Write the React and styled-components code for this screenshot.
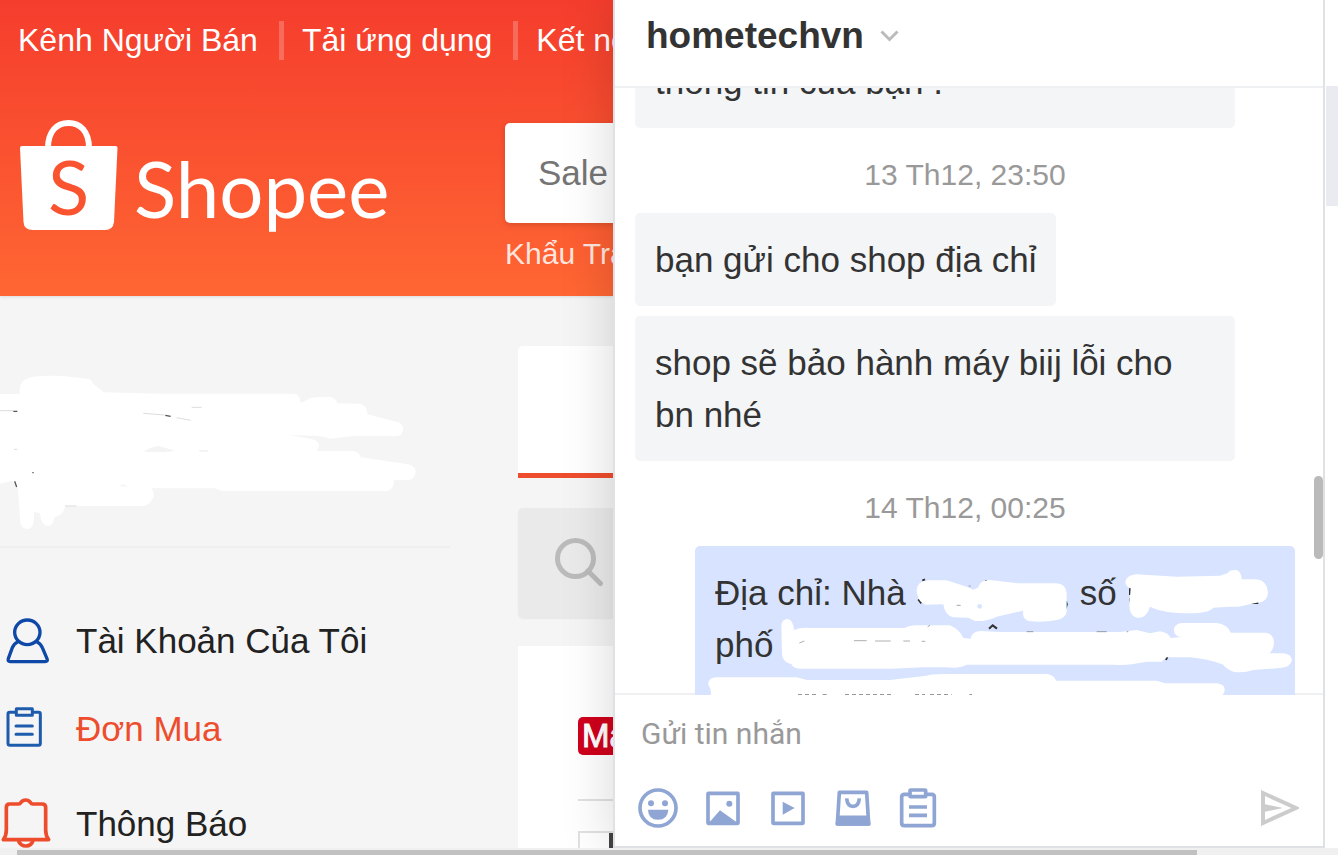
import React, { useLayoutEffect, useRef } from "react";
import styled, { createGlobalStyle } from "styled-components";

const GlobalStyle = createGlobalStyle`
  * {
    box-sizing: border-box;
  }

  body {
    margin: 0;
    overflow: hidden;
    font-family: "Liberation Sans", Arial, sans-serif;
    background-color: white;
  }

  button, input {
    font-family: inherit;
    border: 0;
    padding: 0;
    background: none;
  }
`;

const Page = styled.div`
  display: flex;
  flex-direction: column;
  height: 100vh;
`;

const Columns = styled.div`
  flex: 1;
  min-height: 0;
  display: grid;
  grid-template-columns: 613fr 712fr 13px;
`;

/* ---------- shop ---------- */

const Shop = styled.main`
  min-width: 0;
  overflow: hidden;
  background-color: #f5f5f5;
`;

const ShopHeader = styled.header`
  height: 296px;
  padding-top: 21px;
  background: linear-gradient(#f53d2d, #ff6633);
  box-shadow: 0 1px 3px rgba(0, 0, 0, 0.1);
`;

const TopNav = styled.nav`
  display: flex;
  height: 39px;
  align-items: stretch;
`;

const TopLink = styled.a`
  flex: none;
  padding: 0 21px 0 18px;
  line-height: 38px;
  font-size: 32px;
  color: white;
  text-decoration: none;
  white-space: nowrap;

  & + & {
    border-left: 5px solid rgba(255, 255, 255, 0.22);
  }
`;

const HeaderRow = styled.div`
  display: flex;
  gap: 115px;
  padding: 58px 0 0 20px;
`;

const LogoLink = styled.a`
  flex: none;
  width: 370px;
  height: 122px;
`;

const SearchColumn = styled.div`
  flex: none;
  width: 800px;
  padding-top: 5px;
`;

const SearchBox = styled.input`
  display: block;
  width: 100%;
  height: 100px;
  padding: 0 33px;
  border-radius: 5px;
  background-color: white;
  font-size: 35px;
  box-shadow: 0 2px 6px rgba(0, 0, 0, 0.15);

  &::placeholder {
    color: #757575;
    opacity: 1;
  }
`;

const Keyword = styled.a`
  display: block;
  margin-top: 13px;
  line-height: 35px;
  font-size: 30px;
  color: rgba(255, 255, 255, 0.85);
  text-decoration: none;
`;

const ShopBody = styled.div`
  display: flex;
  gap: 68px;
`;

const Sidebar = styled.aside`
  flex: none;
  width: 450px;
`;

const Profile = styled.div`
  height: 252px;
  border-bottom: 2px solid #efefef;

  svg {
    display: block;
  }
`;

const Menu = styled.nav`
  padding-top: 49px;
`;

const MenuItem = styled.a`
  display: flex;
  align-items: center;
  gap: 24px;
  height: 88px;
  margin-top: ${(props) => (props.$spaced ? "7px" : "0")};
  font-size: 35px;
  color: ${(props) => (props.$active ? "#ee4d2d" : "#222")};
  text-decoration: none;
`;

const Orders = styled.section`
  flex: none;
  width: 1000px;
  padding-top: 50px;
`;

const Tabs = styled.div`
  height: 132px;
  background-color: white;
  border-bottom: 5px solid #ee4d2d;
  border-radius: 5px 5px 0 0;
`;

const OrderSearch = styled.label`
  display: flex;
  align-items: center;
  height: 110px;
  margin: 30px 0 28px;
  padding-left: 35px;
  border-radius: 5px;
  background-color: #eaeaea;
  box-shadow: 0 1px 2px rgba(0, 0, 0, 0.06);
`;

const OrderInput = styled.input`
  flex: 1;
  height: 100%;
`;

const OrderCard = styled.article`
  height: 400px;
  padding: 71px 60px 0;
  background-color: white;
`;

const MallBadge = styled.span`
  display: block;
  width: 80px;
  height: 38px;
  padding-left: 4px;
  border-radius: 5px;
  background-color: #d0011b;
  color: white;
  font-size: 33px;
  line-height: 38px;
  -webkit-text-stroke: 1px white;
`;

const OrderItem = styled.div`
  margin-top: 44px;
  padding-top: 30px;
  border-top: 2px solid #e1e1e1;
`;

const Thumb = styled.div`
  width: 200px;
  height: 200px;
  padding-left: 29px;
  border: 2px solid #e1e1e1;

  &::before {
    content: "";
    display: block;
    height: 100%;
    background-color: #444;
  }
`;

/* ---------- chat ---------- */

const Chat = styled.section`
  position: relative;
  z-index: 1;
  min-width: 0;
  min-height: 0;
  display: flex;
  flex-direction: column;
  background-color: white;
  border: 2px solid #dfe1e5;
  border-top: 0;
  box-shadow: 0 0 50px rgba(0, 0, 0, 0.16);
`;

const ChatHeader = styled.header`
  flex: none;
  display: flex;
  align-items: center;
  gap: 16px;
  height: 88px;
  padding: 0 31px 14px;
  border-bottom: 2px solid #eff0f2;
`;

const ShopName = styled.h1`
  margin: 0;
  font-size: 37px;
  line-height: 44px;
  color: #333;
`;

const IconButton = styled.button`
  display: flex;
  cursor: pointer;
`;

const Scroller = styled.div`
  position: relative;
  z-index: 1;
  flex: 1;
  min-height: 0;
  display: flex;
  margin-bottom: -2px;
`;

const Messages = styled.div`
  flex: 1;
  overflow: hidden;
  padding: 0 19px 0 20px;
`;

const Track = styled.div`
  width: 9px;
  padding-top: 388px;
`;

const TrackThumb = styled.div`
  height: 83px;
  border-radius: 5px;
  background-color: #bababa;
`;

const Bubble = styled.div`
  position: relative;
  width: ${(props) => (props.$wide ? "600px" : "fit-content")};
  max-width: 600px;
  margin-bottom: 10px;
  margin-left: ${(props) => (props.$own ? "auto" : "0")};
  padding: 21px 20px 20px;
  border-radius: 5px;
  background-color: ${(props) => (props.$own ? "#d7e3ff" : "#f4f5f7")};
  font-size: 35px;
  line-height: 52px;
  color: #333;
`;

const Time = styled.div`
  height: 85px;
  margin-top: -10px;
  padding-top: 4px;
  line-height: 85px;
  font-size: 30px;
  text-align: center;
  color: #999;
`;

const Blank = styled.span`
  display: inline-block;
  width: ${(props) => props.$width}px;
`;

const Cover = styled.svg`
  position: absolute;
  top: 0;
  left: 0;
`;

const Composer = styled.form`
  flex: none;
  display: flex;
  flex-direction: column;
  padding: 0 24px 18px 23px;
  border-top: 2px solid #eff0f2;
`;

const MessageInput = styled.input`
  height: 76px;
  margin-bottom: 17px;
  padding: 0 3px;
  font-family: Roboto, sans-serif;
  font-size: 30px;

  &::placeholder {
    color: #999;
    opacity: 1;
  }
`;

const Tools = styled.div`
  display: flex;
  align-items: center;
  gap: 25px;
`;

const SendButton = styled(IconButton)`
  margin-left: auto;
`;

const Rail = styled.div`
  position: relative;
  z-index: 1;
  padding: 86px 0 0 1px;
  background-color: white;
`;

const RailItem = styled.div`
  height: 120px;
  background-color: #eaebf0;
`;

const BottomBar = styled.div`
  position: relative;
  z-index: 2;
  flex: none;
  height: 7px;
  padding: 2px 141px 0 17px;
  background-color: #f0f0f0;
`;

const BottomThumb = styled.div`
  height: 5px;
  background-color: #c1c1c1;
`;

/* ---------- drawings ---------- */

const Logo = () => (
	<svg width="370" height="122" viewBox="20 118 370 122" role="img" aria-label="Shopee">
		<path d="M48 148C48 131 57 123 68.500 123S89 131 89 148" fill="none" stroke="white" strokeWidth="6" />
		<path d="M22 146H115.500Q117.500 146 117.500 148L114 222Q113 230 105 230H33Q24 230 23.500 222L20 148Q20 146 22 146Z" fill="white" />
		<g fontFamily="Lato, sans-serif">
			<text x="48" y="215" fontSize="76" fill="#f9532f">S</text>
			<text x="134" y="218" fontSize="78" fill="white">Shopee</text>
		</g>
	</svg>
);

const UserIcon = () => (
	<svg width="52" height="52" viewBox="0 45 156 156" fill="none" stroke="#0e49a8" strokeWidth="10" strokeLinejoin="round">
		<ellipse cx="82" cy="97" rx="38" ry="37" />
		<path d="M54 125Q42 130 37 143L25 176Q22 185 31 185H135Q145 185 141 176L127 143Q122 130 110 125" />
	</svg>
);

const OrderIcon = () => (
	<svg width="52" height="52" viewBox="0 309 156 156" fill="none" stroke="#1d5cad" strokeWidth="9" strokeLinejoin="round">
		<path d="M48 337H29Q24 337 24 342V430Q24 436 30 436H116Q121 436 121 430V342Q121 337 116 337H98" />
		<rect x="49" y="326" width="48" height="20" />
		<path d="M48 378H97M48 403H97" strokeLinecap="round" />
	</svg>
);

const BellIcon = () => (
	<svg width="52" height="52" viewBox="0 594 156 156" fill="none" stroke="#ee4d2d" strokeWidth="11" strokeLinejoin="round">
		<path d="M10 719Q19 708 19 690V622Q19 612 29 612H56Q60 612 63 607Q68 600 77 600T91 607Q94 612 98 612H126Q137 612 137 622V690Q137 708 146 719Z" />
		<path d="M55 722Q62 738 78 738T99 722" />
	</svg>
);

const SearchIcon = () => (
	<svg width="52" height="52" viewBox="0 0 52 52" fill="none" stroke="#bbb" strokeWidth="5">
		<circle cx="22.500" cy="21.500" r="18" />
		<path d="M35 34L47.500 46.500" strokeLinecap="round" />
	</svg>
);

const TOOLS = [
	{
		label: "Biểu cảm",
		cx: 100,
		draw: (
			<>
				<circle cx="100" cy="100" r="54" />
				<g fill="#8fa5d3" stroke="none">
					<circle cx="79" cy="86" r="9" />
					<circle cx="121" cy="86" r="9" />
					<path d="M70 105H131Q129 135 100 135T70 105Z" />
				</g>
			</>
		),
	},
	{
		label: "Hình ảnh",
		cx: 296,
		draw: (
			<>
				<rect x="251" y="56" width="90" height="90" rx="1" />
				<circle cx="315" cy="87" r="9" fill="#8fa5d3" stroke="none" />
				<path d="M256 142L287 107L336 142Z" fill="#8fa5d3" stroke="none" />
			</>
		),
	},
	{
		label: "Video",
		cx: 491,
		draw: (
			<>
				<rect x="446" y="56" width="90" height="90" rx="1" />
				<path d="M475 81L511 100L475 120Z" fill="#8fa5d3" stroke="none" />
			</>
		),
	},
	{
		label: "Sản phẩm",
		cx: 685,
		draw: (
			<>
				<path d="M644 53H726L732 148H638Z" />
				<path d="M642 128H729L732 148H638Z" fill="#8fa5d3" />
				<path d="M666 71Q668 95 685 95T704 71" />
			</>
		),
	},
	{
		label: "Đơn hàng",
		cx: 876,
		draw: (
			<>
				<path d="M849 59H835Q827 59 827 67V145Q827 153 835 153H917Q925 153 925 145V67Q925 59 917 59H903" />
				<rect x="852" y="46" width="47" height="20" rx="2" />
				<path d="M849 97H903M849 122H903" />
			</>
		),
	},
];

const MENU = [
	{ label: "Tài Khoản Của Tôi", icon: <UserIcon /> },
	{ label: "Đơn Mua", icon: <OrderIcon />, active: true },
	{ label: "Thông Báo", icon: <BellIcon />, spaced: true },
];

const ProfileScribble = () => (
	<svg width="450" height="250" viewBox="0 -192 1350 750" fill="white" aria-hidden="true">
		<path d="M0 102H60Q52 62 90 53Q110 46 190 48L262 56Q274 58 280 72L312 97L480 101H882Q900 103 902 130L930 115Q950 109 990 111Q1008 113 1012 130L1080 131Q1102 136 1102 163L1195 187Q1210 195 1210 208Q1208 227 1190 228L1060 228L990 236L960 228L870 225L935 237Q956 242 957 256Q956 269 948 273H1060Q1078 276 1082 292L1225 313Q1247 320 1247 335Q1246 357 1225 360H1182Q1182 390 1160 393H665L645 385H455Q462 396 462 408Q450 436 430 438H195Q192 466 164 470Q160 495 144 498Q122 496 120 460L102 455V480Q100 507 80 507Q60 503 60 480L54 385L36 362L0 371Z" />
		<path d="M432 274Q450 262 475 258L525 272L500 276H440ZM596 270H625V276H600ZM361 378Q370 368 382 381Z" fill="#f4f4f4" />
		<path d="M496 166L512 169M40 154H52M44 364L50 381M97 338H101" stroke="#555" strokeWidth="4" />
		<path d="M0 152H40M430 160L494 165M530 173L572 181M575 142H605M42 268H52M195 438H230" fill="none" stroke="#ddd" strokeWidth="3" />
	</svg>
);

const AddressScribble = () => (
	<Cover width="600" height="197" viewBox="15 18 1800 591" fill="white" aria-hidden="true">
		<path d="M685 178L694 190M888 120V134M1131 190L1128 200M1320 145V165M1322 175V185M1620 188H1628M1680 189H1705M697 122L705 118" stroke="#333" strokeWidth="6" />
		<path d="M897 266L908 256L921 266" fill="none" stroke="#333" strokeWidth="6" />
		<path d="M1432 350L1428 360" stroke="#333" strokeWidth="6" />
		<path d="M680 150Q683 122 715 121H770L830 140L850 149L865 142Q870 120 900 120L985 130H1100Q1128 132 1130 160V215Q1126 235 1100 240Q1060 248 1015 243Q995 235 1000 212L920 230Q890 245 855 243L835 233L790 232Q764 226 760 193L710 194Q683 190 680 150Z" />
		<path d="M1306 125Q1310 106 1340 103L1460 110L1590 107L1612 100Q1620 88 1640 90Q1654 95 1655 118H1700Q1732 122 1734 158Q1732 188 1700 188L1645 200L1620 200L1570 203Q1555 220 1500 220Q1420 220 1380 200Q1370 234 1345 234Q1320 230 1318 200L1322 144Q1306 140 1306 125Z" />
		<path d="M274 255Q276 237 293 237Q310 240 312 270Q330 262 360 264H645Q660 254 690 256H780Q810 270 820 294L842 296Q845 275 870 273L930 276H1290L1340 270L1380 280L1410 274Q1435 278 1442 294L1475 291Q1450 290 1452 265Q1458 249 1480 249H1580Q1612 252 1622 278H1725Q1752 280 1752 310Q1750 330 1738 340H1780Q1804 342 1806 360Q1802 382 1770 384L1690 390Q1660 400 1630 395Q1605 385 1600 374Q1550 356 1500 352L1430 352L1415 365H1370L1330 372Q1300 376 1270 374H830Q810 386 770 382L700 382L600 386H330Q310 386 304 372Q280 368 276 345Z" />
		<path d="M54 432Q56 412 80 412H320L350 420H600L710 407Q720 402 760 402H1070Q1092 404 1098 422H1400L1425 430H1580Q1604 433 1604 448Q1604 466 1590 467H62Q66 450 54 432Z" />
		<circle cx="869" cy="199" r="7" fill="#d7e3ff" />
		<path d="M328 309L343 303M492 302H530M555 303H602M640 303H660M695 304H706" stroke="#888" strokeWidth="2" />
		<path d="M800 196H812M836 138H842M713 260L720 256M1010 275H1030M1220 275H1250M1310 275H1315" stroke="#777" strokeWidth="2" />
		<path d="M324 466H378M398 466H410M465 466H610M675 466H705M720 466H785M838 466H846" stroke="#333" strokeWidth="5" strokeDasharray="12 9" />
	</Cover>
);

const ChatPanel = () => {
	const listRef = useRef(null);

	useLayoutEffect(() => {
		// first message sits partly under the chat header
		listRef.current.scrollTop = 53;
	}, []);

	return (
		<Chat>
			<ChatHeader>
				<ShopName>hometechvn</ShopName>
				<IconButton aria-label="Tùy chọn">
					<svg width="19" height="12" viewBox="0 0 19 12" fill="none" stroke="#bbb" strokeWidth="3">
						<path d="M1.500 1.500L9.500 9.500L17.500 1.500" />
					</svg>
				</IconButton>
			</ChatHeader>

			<Scroller>
				<Messages ref={listRef}>
					<Bubble $wide>thông tin của bạn .</Bubble>
					<Time>13 Th12, 23:50</Time>
					<Bubble>bạn gửi cho shop địa chỉ</Bubble>
					<Bubble $wide>shop sẽ bảo hành máy biij lỗi cho bn nhé</Bubble>
					<Time>14 Th12, 00:25</Time>
					<Bubble $own $wide>
						Địa chỉ: Nhà <Blank $width={145} />, số
						<br />
						phố
						<br />
						&nbsp;
						<AddressScribble />
					</Bubble>
				</Messages>
				<Track>
					<TrackThumb />
				</Track>
			</Scroller>

			<Composer onSubmit={(e) => e.preventDefault()}>
				<MessageInput type="text" placeholder="Gửi tin nhắn" aria-label="Gửi tin nhắn" />
				<Tools>
					{TOOLS.map((tool) => (
						<IconButton key={tool.label} type="button" aria-label={tool.label}>
							<svg
								width="40"
								height="40"
								viewBox={`${tool.cx - 60} 40 120 120`}
								fill="none"
								stroke="#8fa5d3"
								strokeWidth="11"
								strokeLinejoin="round"
							>
								{tool.draw}
							</svg>
						</IconButton>
					))}
					<SendButton type="submit" aria-label="Gửi">
						<svg width="38" height="36" viewBox="0 0 38 36">
							<path d="M2 3L35 18L2 33Z" fill="none" stroke="#ccc" strokeWidth="4" />
							<path d="M3 14L22 18L3 22Z" fill="#ccc" />
						</svg>
					</SendButton>
				</Tools>
			</Composer>
		</Chat>
	);
};

const App = () => {
	return (
		<Page>
			<GlobalStyle />
			<Columns>
				<Shop>
					<ShopHeader>
						<TopNav>
							<TopLink href="#seller">Kênh Người Bán</TopLink>
							<TopLink href="#app">Tải ứng dụng</TopLink>
							<TopLink href="#connect">Kết nối</TopLink>
						</TopNav>
						<HeaderRow>
							<LogoLink href="#home">
								<Logo />
							</LogoLink>
							<SearchColumn>
								<SearchBox type="text" placeholder="Sale" aria-label="Tìm kiếm" />
								<Keyword href="#keyword">Khẩu Trang</Keyword>
							</SearchColumn>
						</HeaderRow>
					</ShopHeader>

					<ShopBody>
						<Sidebar>
							<Profile>
								<ProfileScribble />
							</Profile>
							<Menu>
								{MENU.map((item) => (
									<MenuItem
										key={item.label}
										href="#menu"
										$active={item.active}
										$spaced={item.spaced}
									>
										{item.icon}
										{item.label}
									</MenuItem>
								))}
							</Menu>
						</Sidebar>

						<Orders>
							<Tabs />
							<OrderSearch>
								<SearchIcon />
								<OrderInput type="text" aria-label="Tìm đơn hàng" />
							</OrderSearch>
							<OrderCard>
								<MallBadge>Mall</MallBadge>
								<OrderItem>
									<Thumb />
								</OrderItem>
							</OrderCard>
						</Orders>
					</ShopBody>
				</Shop>

				<ChatPanel />

				<Rail>
					<RailItem />
				</Rail>
			</Columns>

			<BottomBar>
				<BottomThumb />
			</BottomBar>
		</Page>
	);
};

export default App;
